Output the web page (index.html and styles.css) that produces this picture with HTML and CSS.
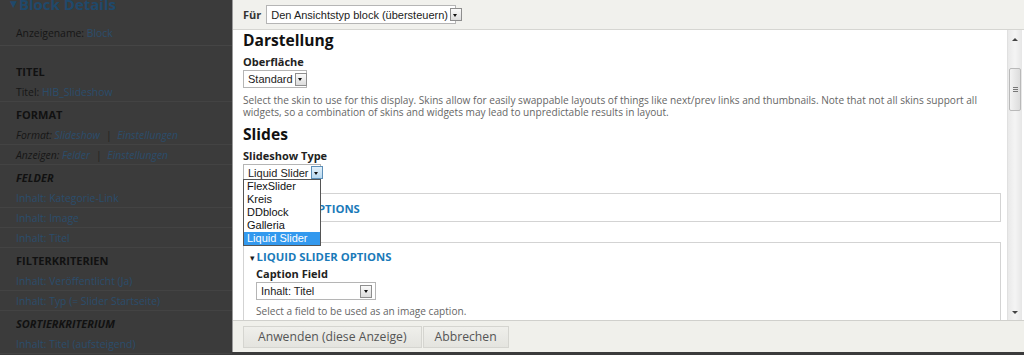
FILE: index.html
```html
<!DOCTYPE html>
<html lang="de">
<head>
<meta charset="utf-8">
<title>Views – Block Details</title>
<link rel="stylesheet" href="styles.css">
</head>
<body>
<aside class="sidebar">
  <div class="sb-head"><span class="tri">&#9660;</span>Block Details</div>
  <div class="sb-row first">Anzeigename: <a>Block</a></div>
  <div class="sb-sep"></div>
  <div class="sb-title">TITEL</div>
  <div class="sb-row">Titel: <a>HIB_Slideshow</a></div>
  <div class="sb-title">FORMAT</div>
  <div class="sb-row it">Format: <a>Slideshow</a> <span class="bar">|</span> <a>Einstellungen</a></div>
  <div class="sb-row it">Anzeigen: <a>Felder</a> <span class="bar">|</span> <a>Einstellungen</a></div>
  <div class="sb-title it">FELDER</div>
  <div class="sb-row"><a>Inhalt: Kategorie-Link</a></div>
  <div class="sb-row"><a>Inhalt: Image</a></div>
  <div class="sb-row"><a>Inhalt: Titel</a></div>
  <div class="sb-title">FILTERKRITERIEN</div>
  <div class="sb-row"><a>Inhalt: Veröffentlicht (Ja)</a></div>
  <div class="sb-row"><a>Inhalt: Typ (= Slider Startseite)</a></div>
  <div class="sb-title it">SORTIERKRITERIUM</div>
  <div class="sb-row"><a>Inhalt: Titel (aufsteigend)</a></div>
</aside>

<main class="modal">
  <div class="topbar">
    <span class="fuer">Für</span>
    <div class="select sel-fuer"><span class="sel-text">Den Ansichtstyp block (übersteuern)</span><span class="arrow"></span></div>
  </div>
  <div class="body">
    <div class="scroll">
      <h2 class="h2">Darstellung</h2>
      <div class="label">Oberfläche</div>
      <div class="select sel-std"><span class="sel-text">Standard</span><span class="arrow"></span></div>
      <p class="desc">Select the skin to use for this display. Skins allow for easily swappable layouts of things like next/prev links and thumbnails. Note that not all skins support all widgets, so a combination of skins and widgets may lead to unpredictable results in layout.</p>
      <h2 class="h2 slides">Slides</h2>
      <div class="label">Slideshow Type</div>
      <div class="dd-wrap">
        <div class="select sel-type"><span class="sel-text">Liquid Slider</span><span class="arrow hot"></span></div>
        <ul class="dd-list">
          <li>FlexSlider</li>
          <li>Kreis</li>
          <li>DDblock</li>
          <li>Galleria</li>
          <li class="sel">Liquid Slider</li>
        </ul>
      </div>
      <div class="fs fs-closed">
        <div class="legend"><span class="ltri">&#9656;</span>GALLERY OPTIONS</div>
      </div>
      <div class="fs fs-open">
        <div class="legend"><span class="ltri">&#9662;</span>LIQUID SLIDER OPTIONS</div>
        <div class="label">Caption Field</div>
        <div class="select sel-cap"><span class="sel-text">Inhalt: Titel</span><span class="arrow"></span></div>
        <p class="desc small">Select a field to be used as an image caption.</p>
      </div>
    </div>
    <div class="scrollbar">
      <span class="sb-up"></span>
      <span class="sb-thumb"><i></i><i></i><i></i></span>
      <span class="sb-down"></span>
    </div>
  </div>
  <div class="footer">
    <button class="btn">Anwenden (diese Anzeige)</button>
    <button class="btn">Abbrechen</button>
  </div>
</main>
</body>
</html>
```

FILE: styles.css
```css
html, body {
  margin: 0;
  padding: 0;
}
body {
  width: 1024px;
  height: 355px;
  overflow: hidden;
  display: flex;
  align-items: flex-start;
  background: #3b3b3b;
  font-family: "Open Sans", "DejaVu Sans", sans-serif;
}

/* ---------- dimmed sidebar ---------- */
.sidebar {
  width: 232px;
  flex: none;
  color: #161616;
  font-size: 10.4px;
}
.sidebar a {
  color: #2b4d6b;
}
.sb-head {
  margin-top: -6px;
  height: 27px;
  padding-left: 10px;
  font-size: 15px;
  font-weight: bold;
  color: #20496b;
  line-height: 20px;
}
.sb-head .tri {
  font-size: 9px;
  margin-right: 2px;
  vertical-align: 3px;
}
.sb-row {
  height: 20px;
  line-height: 20px;
  padding-left: 16px;
  border-bottom: 1px solid #434343;
  box-sizing: border-box;
}
.sb-row.first {
  height: 24px;
  line-height: 24px;
  border-bottom: none;
}
.sb-sep {
  height: 14px;
  box-sizing: border-box;
  border-top: 1px solid #454545;
}
.sb-title {
  height: 23px;
  line-height: 26px;
  padding-left: 16px;
  font-weight: bold;
  font-size: 11px;
  color: #111;
}
.it {
  font-style: italic;
}
.bar {
  color: #222;
  margin: 0 3px;
}

/* ---------- modal ---------- */
.modal {
  flex: 1;
  height: 352px;
  display: flex;
  flex-direction: column;
  background: #fff;
  border-left: 1px solid #9a9a9a;
  box-sizing: border-box;
}
.topbar {
  height: 30px;
  flex: none;
  display: flex;
  align-items: center;
  padding-left: 10px;
  background: #f1f1ed;
  border-bottom: 1px solid #d6d6d2;
  box-sizing: border-box;
}
.fuer {
  font-weight: bold;
  font-size: 11px;
  color: #333;
  margin-right: 5px;
}

/* select boxes */
.select {
  display: flex;
  align-items: center;
  justify-content: space-between;
  height: 18px;
  box-sizing: border-box;
  border: 1px solid #b5b5b5;
  background: #fff;
  padding: 0 2px 0 4px;
  font-family: "Liberation Sans", Arial, sans-serif;
  font-size: 11px;
  color: #222;
}
.sel-text {
  white-space: nowrap;
  margin-right: 2px;
}
.arrow {
  width: 12px;
  height: 13px;
  box-sizing: border-box;
  border: 1px solid #8e8e8e;
  background: linear-gradient(#fafafa, #dcdcdc);
  position: relative;
  flex: none;
}
.arrow::after {
  content: "";
  position: absolute;
  left: 2.5px;
  top: 4.5px;
  border-left: 2.5px solid transparent;
  border-right: 2.5px solid transparent;
  border-top: 3px solid #111;
}
.arrow.hot {
  background: linear-gradient(#e3f1fb, #b9d9f0);
  border-color: #5c8fb8;
}
.sel-fuer {
  width: 190px;
  height: 19px;
}
.sel-std {
  width: 64px;
}
.sel-type {
  width: 78px;
  height: 17px;
}
.sel-cap {
  width: 120px;
}
.sel-cap .arrow {
  margin-right: 1px;
}

.body {
  flex: 1;
  display: flex;
  min-height: 0;
  overflow: hidden;
}
.scroll {
  flex: 1;
  padding: 0 6px 0 10px;
  overflow: hidden;
}
.h2 {
  margin: 0;
  height: 20px;
  line-height: 20px;
  font-size: 15.6px;
  font-weight: bold;
  color: #111;
}
.h2.slides {
  margin-top: 6px;
}
.label {
  margin-top: 5px;
  height: 13px;
  line-height: 13px;
  font-size: 11px;
  font-weight: bold;
  color: #222;
  margin-bottom: 2px;
}
.desc {
  margin: 6px 0 0;
  font-size: 10.1px;
  line-height: 12px;
  color: #666;
  padding-right: 8px;
}
.desc.small {
  margin-top: 5px;
}

/* dropdown */
.dd-wrap {
  position: relative;
}
.dd-list {
  position: absolute;
  left: 0;
  top: 15px;
  z-index: 5;
  margin: 0;
  padding: 0;
  list-style: none;
  width: 78px;
  box-sizing: border-box;
  border: 1px solid #555;
  background: #fff;
  font-family: "Liberation Sans", Arial, sans-serif;
  font-size: 11px;
  color: #111;
}
.dd-list li {
  height: 13px;
  line-height: 13px;
  padding-left: 3px;
}
.dd-list li.sel {
  background: #3399ee;
  color: #fff;
}

/* fieldsets */
.fs {
  border: 1px solid #d3d3d3;
  box-sizing: border-box;
}
.fs-closed {
  margin-top: 12px;
  height: 29px;
  padding: 8px 0 0 6px;
}
.fs-open {
  margin-top: 20px;
  padding: 7px 0 0 12px;
  height: 100px;
}
.legend {
  font-size: 11.3px;
  font-weight: bold;
  color: #1a7ab9;
  height: 14px;
  line-height: 14px;
}
.fs-open .legend {
  margin-left: -6px;
}
.ltri {
  font-size: 9px;
  color: #1a1a1a;
  margin-right: 2px;
}
.fs-open .label {
  margin-top: 3px;
}

/* scrollbar */
.scrollbar {
  width: 14px;
  flex: none;
  margin-right: 2px;
  background: linear-gradient(90deg, #e9e9e9, #f4f4f4 50%, #e6e6e6);
  border-left: 1px solid #e0e0e0;
  display: flex;
  flex-direction: column;
  align-items: center;
}
.sb-up {
  margin-top: 8px;
  border-left: 3px solid transparent;
  border-right: 3px solid transparent;
  border-bottom: 3px solid #444;
}
.sb-thumb {
  margin-top: 27px;
  width: 12px;
  height: 43px;
  box-sizing: border-box;
  border: 1px solid #b9b9b9;
  border-radius: 2px;
  background: linear-gradient(90deg, #f3f3f3, #dcdcdc);
  display: flex;
  flex-direction: column;
  align-items: center;
  justify-content: center;
  gap: 1px;
}
.sb-thumb i {
  display: block;
  width: 5px;
  height: 1px;
  background: #777;
}
.sb-down {
  margin-top: auto;
  margin-bottom: 6px;
  border-left: 3px solid transparent;
  border-right: 3px solid transparent;
  border-top: 3px solid #444;
}

/* footer */
.footer {
  height: 32px;
  flex: none;
  display: flex;
  align-items: center;
  padding-left: 10px;
  background: #f0f0eb;
  border-top: 1px solid #d0d0cc;
  box-sizing: border-box;
}
.btn {
  height: 22px;
  margin: 0;
  padding: 0 14px;
  border: 1px solid #d5d5d0;
  background: linear-gradient(#efefeb, #e4e4df);
  font-family: "Open Sans", "DejaVu Sans", sans-serif;
  font-size: 12.2px;
  color: #555;
}
.btn + .btn {
  margin-left: 1px;
  padding: 0 11px;
}
```
